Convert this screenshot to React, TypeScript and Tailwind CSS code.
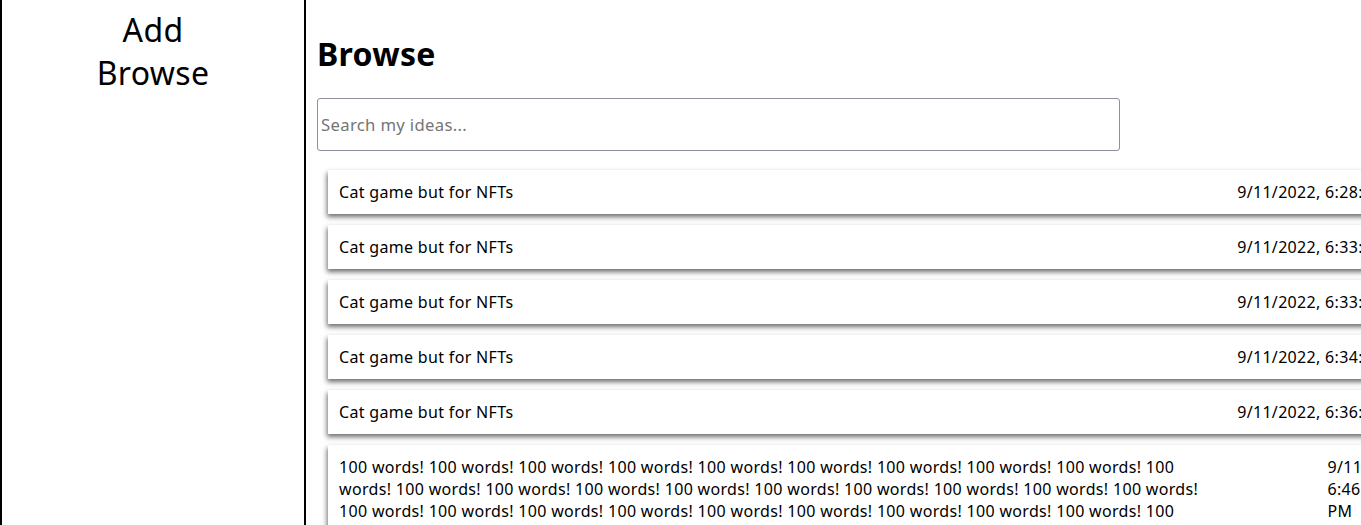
type Idea = {
  id: number;
  text: string;
  date: string;
};

const IDEAS: Idea[] = [
  { id: 1, text: "Cat game but for NFTs", date: "9/11/2022, 6:28:06 PM" },
  { id: 2, text: "Cat game but for NFTs", date: "9/11/2022, 6:33:21 PM" },
  { id: 3, text: "Cat game but for NFTs", date: "9/11/2022, 6:33:52 PM" },
  { id: 4, text: "Cat game but for NFTs", date: "9/11/2022, 6:34:17 PM" },
  { id: 5, text: "Cat game but for NFTs", date: "9/11/2022, 6:36:04 PM" },
  {
    id: 6,
    text: Array.from({ length: 60 }, () => "100 words!").join(" "),
    date: "9/11/2022, 6:46:38 PM",
  },
];

function IdeaCard({ idea }: { idea: Idea }) {
  return (
    <div className="mb-[11px] ml-[11px] flex w-[1094px] justify-between bg-white p-[11px] shadow-[-1px_3px_5px_#6e6e6e]">
      <span>{idea.text}</span>
      <span className="ml-[122px]">{idea.date}</span>
    </div>
  );
}

export default function App() {
  return (
    <div className="flex h-screen w-screen overflow-hidden bg-white font-['Noto_Sans',sans-serif] text-[16px] leading-[normal] tracking-[0.02em] text-black">
      {/* Sidebar */}
      <aside className="flex w-[306px] shrink-0 flex-col items-center border-x-2 border-black pt-[8px] text-[32px]">
        <a href="#">Add</a>
        <a href="#">Browse</a>
      </aside>

      {/* Main */}
      <main className="min-w-0 flex-1 px-[11px] pt-[32px]">
        <h1 className="mb-[23px] text-[32px] font-bold">Browse</h1>
        <input
          type="text"
          placeholder="Search my ideas..."
          className="h-[53px] w-[803px] rounded-[3px] border border-[#8f8f9d] px-[3px] text-[16.7px] placeholder:text-[#757575]"
        />
        <div className="mt-[19px] flex flex-col">
          {IDEAS.map((idea) => (
            <IdeaCard key={idea.id} idea={idea} />
          ))}
        </div>
      </main>
    </div>
  );
}
